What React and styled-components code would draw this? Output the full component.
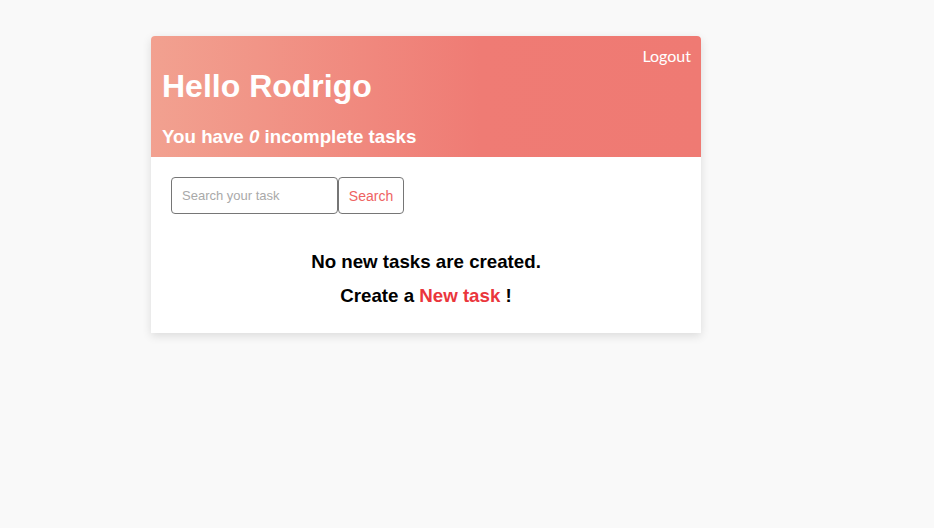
import React from "react";
import styled, { createGlobalStyle } from "styled-components";

const GlobalStyle = createGlobalStyle`
  html, body { margin: 0; padding: 0; background: #f9f9f9; }
  body { font-family: "Liberation Sans", Arial, sans-serif; }
`;

const Page = styled.div`
  min-height: 528px;
  padding: 36px 0 0 151px;
  box-sizing: border-box;
`;

const Card = styled.div`
  width: 550px;
  background: #fff;
  border-radius: 4px 4px 0 0;
  box-shadow: 0 3px 10px rgba(0, 0, 0, 0.12);
`;

const Header = styled.header`
  display: flex;
  flex-direction: column;
  padding: 10px 10px 10px 11px;
  border-radius: 4px 4px 0 0;
  background: linear-gradient(to right, #f2a190 0%, #ef7b74 60%, #ef7a73 100%);
  color: #fff;
`;

const TopRow = styled.div`
  display: flex;
  justify-content: flex-end;
`;

const LogoutLink = styled.a`
  font-family: Lato, "Open Sans", sans-serif;
  font-size: 16px;
  line-height: 19px;
  color: #fff;
  cursor: pointer;
`;

const Title = styled.h1`
  margin: 3px 0 0;
  font-size: 32px;
  font-weight: 700;
  line-height: 37px;
`;

const Subtitle = styled.h3`
  margin: 21px 0 0;
  font-size: 18.72px;
  font-weight: 700;
  line-height: 21px;
`;

const Body = styled.div`
  display: flex;
  flex-direction: column;
  padding: 20px 20px 27px;
`;

const SearchRow = styled.form`
  display: flex;
  align-items: stretch;
`;

const SearchInput = styled.input`
  width: 167px;
  height: 37px;
  box-sizing: border-box;
  padding: 0 10px;
  border: 1px solid #767676;
  border-radius: 4px;
  font-family: "Liberation Sans", Arial, sans-serif;
  font-size: 13px;
  color: #333;
  outline: none;
  &::placeholder { color: #a9a9a9; }
`;

const SearchButton = styled.button`
  width: 66px;
  height: 37px;
  box-sizing: border-box;
  padding: 0;
  background: #fff;
  border: 1px solid #767676;
  border-radius: 4px;
  font-family: "Liberation Sans", Arial, sans-serif;
  font-size: 14px;
  color: #ee6262;
  cursor: pointer;
`;

const Message = styled.h3`
  margin: ${(p) => p.$top}px 0 0;
  text-align: center;
  font-size: 18.72px;
  font-weight: 700;
  line-height: 21px;
  color: #000;
`;

const Accent = styled.span`
  color: #ea363c;
`;

export default function App() {
  return (
    <>
      <GlobalStyle />
      <Page>
        <Card>
          <Header>
            <TopRow>
              <LogoutLink>Logout</LogoutLink>
            </TopRow>
            <Title>Hello Rodrigo</Title>
            <Subtitle>
              You have <i>0</i> incomplete tasks
            </Subtitle>
          </Header>
          <Body>
            <SearchRow onSubmit={(e) => e.preventDefault()}>
              <SearchInput placeholder="Search your task" />
              <SearchButton type="submit">Search</SearchButton>
            </SearchRow>
            <Message $top={37}>No new tasks are created.</Message>
            <Message $top={13}>
              Create a <Accent>New task</Accent> !
            </Message>
          </Body>
        </Card>
      </Page>
    </>
  );
}
